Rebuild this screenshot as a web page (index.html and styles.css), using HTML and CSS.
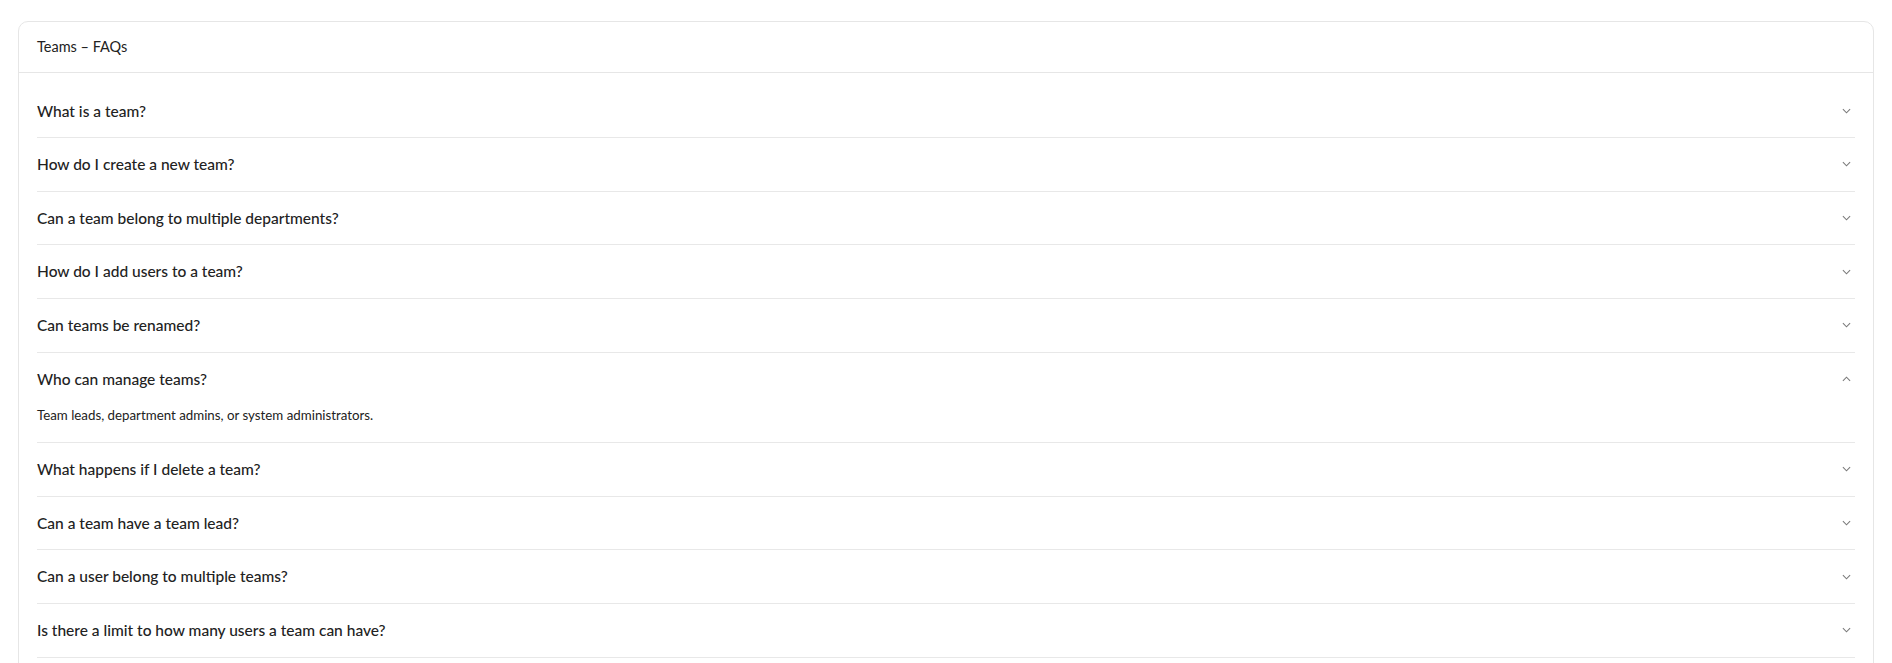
FILE: index.html
```html
<!DOCTYPE html>
<html lang="en">
<head>
	<meta charset="UTF-8">
	<meta name="viewport" content="width=device-width, initial-scale=1">
	<title>Teams – FAQs</title>
	<link rel="stylesheet" href="styles.css">
</head>
<body>
	<div class="page">
		<div class="card">
			<div class="card-head">Teams – FAQs</div>
			<div class="card-body">
				<details class="faq">
					<summary>What is a team?<svg class="chev" viewBox="0 0 10 6"><polyline points="1,1 5,5 9,1"/></svg></summary>
					<p class="answer">A team is a group of users who work together inside a department.</p>
				</details>
				<details class="faq">
					<summary>How do I create a new team?<svg class="chev" viewBox="0 0 10 6"><polyline points="1,1 5,5 9,1"/></svg></summary>
					<p class="answer">Go to Teams and click New team, then fill in the name and department.</p>
				</details>
				<details class="faq">
					<summary>Can a team belong to multiple departments?<svg class="chev" viewBox="0 0 10 6"><polyline points="1,1 5,5 9,1"/></svg></summary>
					<p class="answer">No, each team belongs to a single department.</p>
				</details>
				<details class="faq">
					<summary>How do I add users to a team?<svg class="chev" viewBox="0 0 10 6"><polyline points="1,1 5,5 9,1"/></svg></summary>
					<p class="answer">Open the team and use Add members to pick users.</p>
				</details>
				<details class="faq">
					<summary>Can teams be renamed?<svg class="chev" viewBox="0 0 10 6"><polyline points="1,1 5,5 9,1"/></svg></summary>
					<p class="answer">Yes, from the team settings page.</p>
				</details>
				<details class="faq" open>
					<summary>Who can manage teams?<svg class="chev" viewBox="0 0 10 6"><polyline points="1,1 5,5 9,1"/></svg></summary>
					<p class="answer">Team leads, department admins, or system administrators.</p>
				</details>
				<details class="faq">
					<summary>What happens if I delete a team?<svg class="chev" viewBox="0 0 10 6"><polyline points="1,1 5,5 9,1"/></svg></summary>
					<p class="answer">The team is removed, its members stay in the department.</p>
				</details>
				<details class="faq">
					<summary>Can a team have a team lead?<svg class="chev" viewBox="0 0 10 6"><polyline points="1,1 5,5 9,1"/></svg></summary>
					<p class="answer">Yes, one member can be set as the team lead.</p>
				</details>
				<details class="faq">
					<summary>Can a user belong to multiple teams?<svg class="chev" viewBox="0 0 10 6"><polyline points="1,1 5,5 9,1"/></svg></summary>
					<p class="answer">Yes, a user can be a member of several teams.</p>
				</details>
				<details class="faq">
					<summary>Is there a limit to how many users a team can have?<svg class="chev" viewBox="0 0 10 6"><polyline points="1,1 5,5 9,1"/></svg></summary>
					<p class="answer">There is no fixed limit.</p>
				</details>
			</div>
		</div>
	</div>
</body>
</html>
```

FILE: styles.css
```css
body{
    margin: 0;
    background: #ffffff;
    color: #222222;
    font-family: Lato, "Noto Sans", sans-serif;
}
.page{
    padding: 21px 18px;
}
.card{
    border: 1px solid #e6e6e6;
    border-radius: 10px;
    background: #ffffff;
}
.card-head{
    padding: 15px 18px;
    line-height: 20px;
    font-size: 14.5px;
    border-bottom: 1px solid #e6e6e6;
}
.card-body{
    padding: 11.5px 18px 16px;
}
.faq{
    border-bottom: 1px solid #e8e8e8;
}
.faq summary{
    list-style: none;
    display: flex;
    align-items: center;
    justify-content: space-between;
    padding: 16px 0;
    line-height: 20.65px;
    font-size: 15.5px;
    font-weight: 500;
    cursor: pointer;
}
.faq summary::-webkit-details-marker{
    display: none;
}
.chev{
    width: 9px;
    height: 6px;
    margin-right: 4px;
    fill: none;
    stroke: #7a7a7a;
    stroke-width: 1.2;
}
.faq[open] .chev{
    transform: rotate(180deg);
}
.answer{
    margin: 0;
    padding: 0 0 16px;
    line-height: 20.5px;
    font-size: 13.3px;
}
```
